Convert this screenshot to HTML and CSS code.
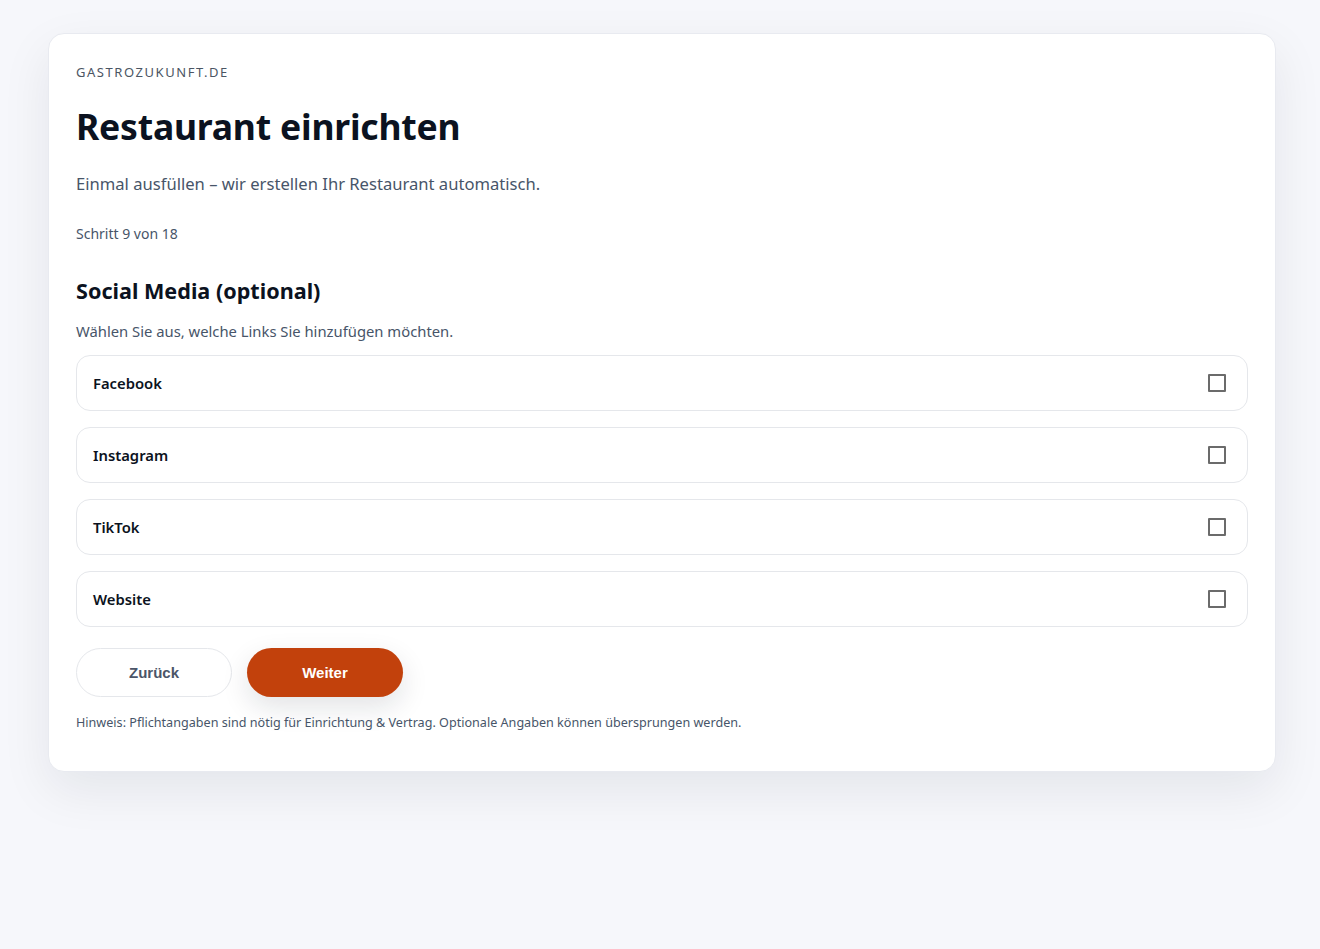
FILE: index.html
```html
<!DOCTYPE html>
<html lang="de">
<head>
<meta charset="utf-8">
<title>Restaurant einrichten</title>
<link rel="stylesheet" href="styles.css">
</head>
<body>
<main class="page">
  <section class="card">
    <div class="brand">GASTROZUKUNFT.DE</div>
    <h1 class="title">Restaurant einrichten</h1>
    <p class="lead">Einmal ausfüllen – wir erstellen Ihr Restaurant automatisch.</p>
    <div class="step">Schritt 9 von 18</div>
    <h2 class="section-title">Social Media (optional)</h2>
    <p class="section-desc">Wählen Sie aus, welche Links Sie hinzufügen möchten.</p>
    <div class="options">
      <label class="option"><span class="option-label">Facebook</span><input type="checkbox" class="check"></label>
      <label class="option"><span class="option-label">Instagram</span><input type="checkbox" class="check"></label>
      <label class="option"><span class="option-label">TikTok</span><input type="checkbox" class="check"></label>
      <label class="option"><span class="option-label">Website</span><input type="checkbox" class="check"></label>
    </div>
    <div class="actions">
      <button class="btn btn-secondary" type="button">Zurück</button>
      <button class="btn btn-primary" type="button">Weiter</button>
    </div>
    <p class="hint">Hinweis: Pflichtangaben sind nötig für Einrichtung &amp; Vertrag. Optionale Angaben können übersprungen werden.</p>
  </section>
</main>
</body>
</html>
```
FILE: styles.css
```css
* { box-sizing: border-box; }
html, body { margin: 0; padding: 0; }
body {
  background: #f6f7fb;
  font-family: "Noto Sans", "Open Sans", sans-serif;
  color: #0f172a;
  min-height: 949px;
}
.page {
  padding: 33px 44px 40px 48px;
}
.card {
  background: #ffffff;
  border: 1px solid #e8eaf0;
  border-radius: 16px;
  box-shadow: 0 18px 50px rgba(15, 23, 42, 0.08);
  padding: 28px 27px 39px 27px;
}
.brand {
  font-size: 13px;
  letter-spacing: 1.55px;
  color: #4b5563;
  line-height: 20px;
}
.title {
  margin: 21px 0 0;
  font-size: 35.5px;
  line-height: 46px;
  font-weight: 700;
  color: #0b1220;
  letter-spacing: -0.2px;
}
.lead {
  margin: 22px 0 0;
  font-size: 16.6px;
  line-height: 26px;
  color: #475569;
}
.step {
  margin-top: 27px;
  font-size: 14px;
  line-height: 20px;
  color: #475569;
}
.section-title {
  margin: 32px 0 0;
  font-size: 21.6px;
  line-height: 30px;
  font-weight: 700;
  color: #0b1220;
}
.section-desc {
  margin: 15px 0 0;
  font-size: 14.8px;
  line-height: 20px;
  color: #475569;
}
.options {
  margin-top: 14px;
  display: flex;
  flex-direction: column;
  gap: 16px;
}
.option {
  display: flex;
  align-items: center;
  justify-content: space-between;
  height: 56px;
  padding: 0 21px 0 16px;
  border: 1px solid #e5e7eb;
  border-radius: 14px;
  background: #fff;
}
.option-label {
  font-size: 14.8px;
  font-weight: 600;
  color: #0b1220;
}
.check {
  appearance: none;
  -webkit-appearance: none;
  margin: 0;
  width: 18px;
  height: 18px;
  border: 2px solid #6b6b6b;
  border-radius: 1px;
  background: #fff;
}
.actions {
  margin-top: 21px;
  display: flex;
  gap: 15px;
}
.btn {
  width: 156px;
  height: 49px;
  border-radius: 999px;
  font-family: "Liberation Sans", Arial, sans-serif;
  font-size: 15px;
  font-weight: 700;
  cursor: pointer;
}
.btn-secondary {
  background: #fff;
  border: 1px solid #e5e7eb;
  color: #4b5568;
}
.btn-primary {
  background: #c2410c;
  border: none;
  color: #fff;
  box-shadow: 0 10px 28px rgba(15, 23, 42, 0.12);
}
.hint {
  margin: 17px 0 0;
  font-size: 12.6px;
  line-height: 18px;
  color: #475569;
}
```
